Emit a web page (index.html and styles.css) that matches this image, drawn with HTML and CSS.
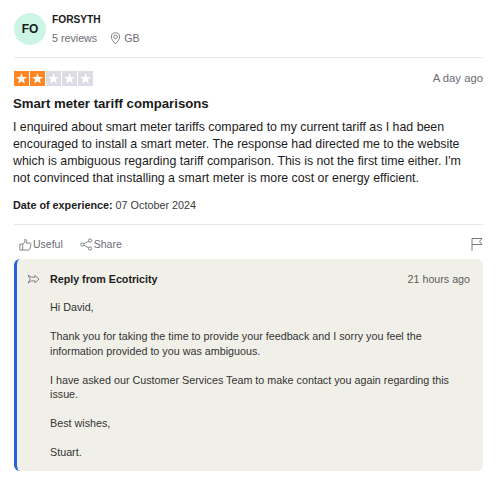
FILE: index.html
```html
<!DOCTYPE html>
<html lang="en">
<head>
<meta charset="utf-8">
<title>Review</title>
<link rel="stylesheet" href="styles.css">
</head>
<body>
<article class="card">
  <header class="consumer">
    <div class="avatar">FO</div>
    <div class="who">
      <div class="name">FORSYTH</div>
      <div class="meta">
        <span>5 reviews</span>
        <span class="loc">
          <svg class="pin" viewBox="0 0 12 14" width="11" height="13" fill="none" stroke="#6b6b75" stroke-width=".9"><path d="M6 13C3.500 10 1.500 8 1.500 5.300a4.500 4.500 0 0 1 9 0C10.500 8 8.500 10 6 13Z"/><circle cx="6" cy="5.300" r="2"/></svg>
          GB
        </span>
      </div>
    </div>
  </header>
  <hr class="rule">
  <div class="rating-row">
    <div class="stars">
      <span class="star on"><svg viewBox="0 0 14 14"><path d="M7 2l1.300 3.600 3.800.1-3 2.300 1.100 3.700L7 9.600l-3.200 2.100L4.900 8l-3-2.300 3.800-.1z"/></svg></span>
      <span class="star on"><svg viewBox="0 0 14 14"><path d="M7 2l1.300 3.600 3.800.1-3 2.300 1.100 3.700L7 9.600l-3.200 2.100L4.900 8l-3-2.300 3.800-.1z"/></svg></span>
      <span class="star"><svg viewBox="0 0 14 14"><path d="M7 2l1.300 3.600 3.800.1-3 2.300 1.100 3.700L7 9.600l-3.200 2.100L4.900 8l-3-2.300 3.800-.1z"/></svg></span>
      <span class="star"><svg viewBox="0 0 14 14"><path d="M7 2l1.300 3.600 3.800.1-3 2.300 1.100 3.700L7 9.600l-3.200 2.100L4.900 8l-3-2.300 3.800-.1z"/></svg></span>
      <span class="star"><svg viewBox="0 0 14 14"><path d="M7 2l1.300 3.600 3.800.1-3 2.300 1.100 3.700L7 9.600l-3.200 2.100L4.900 8l-3-2.300 3.800-.1z"/></svg></span>
    </div>
    <time class="ago">A day ago</time>
  </div>
  <h2 class="title">Smart meter tariff comparisons</h2>
  <p class="body">I enquired about smart meter tariffs compared to my current tariff as I had been encouraged to install a smart meter. The response had directed me to the website which is ambiguous regarding tariff comparison. This is not the first time either. I'm not convinced that installing a smart meter is more cost or energy efficient.</p>
  <p class="date"><b>Date of experience:</b> 07 October 2024</p>
  <hr class="rule rule-2">
  <div class="actions">
    <span class="action">
      <svg viewBox="0 0 14 14" width="13" height="13" fill="none" stroke="#6b6b75" stroke-width=".9"><path d="M1 6.500h3v6.500H1zM4 7l2.300-2.700V1.500c1.300 0 2 .8 2 2L7.800 5.500h4c.9 0 1.300.7 1.100 1.400l-1.200 5c-.2.700-.6 1.100-1.300 1.100H4"/></svg>
      Useful
    </span>
    <span class="action">
      <svg viewBox="0 0 14 14" width="13" height="13" fill="none" stroke="#6b6b75" stroke-width=".9"><circle cx="2.500" cy="7" r="1.700"/><circle cx="10.800" cy="2.700" r="1.700"/><circle cx="10.800" cy="11.300" r="1.700"/><path d="M4 6.200l5.300-2.700M4 7.800l5.300 2.700"/></svg>
      Share
    </span>
    <svg class="flag" viewBox="0 0 12 14" width="12" height="14" fill="none" stroke="#6b6b75" stroke-width=".9"><path d="M1 14V1.500h10L8.500 4.500 11 7.500H1"/></svg>
  </div>
  <section class="reply">
    <div class="reply-head">
      <svg class="reply-icon" viewBox="0 0 14 12" width="13" height="11" fill="none" stroke="#6b6b75" stroke-width=".9"><path d="M1 1.500l4 2h3.500V1.500l4.500 4-4.500 4V7.500H4.500L1 10l2.500-4.500z"/></svg>
      <b class="reply-from">Reply from Ecotricity</b>
      <time class="reply-ago">21 hours ago</time>
    </div>
    <div class="reply-text">
      <p>Hi David,</p>
      <p>Thank you for taking the time to provide your feedback and I sorry you feel the information provided to you was ambiguous.</p>
      <p>I have asked our Customer Services Team to make contact you again regarding this issue.</p>
      <p>Best wishes,</p>
      <p>Stuart.</p>
    </div>
  </section>
</article>
</body>
</html>
```
FILE: styles.css
```css
* { box-sizing: border-box; }
html, body { margin: 0; background: #fff; }
body { font-family: "Liberation Sans", Arial, sans-serif; color: #1c1c1c; width: 500px; height: 484px; overflow: hidden; }
.card { padding: 13px 17px 0 13px; width: 500px; }
.consumer { display: flex; gap: 6px; height: 33px; padding-left: 1px; }
.avatar { width: 32px; height: 32px; border-radius: 50%; background: #ccf5e6; display: flex; align-items: center; justify-content: center; font-size: 12px; font-weight: 700; color: #1c1c1c; }
.who { display: flex; flex-direction: column; }
.name { font-size: 10.200px; font-weight: 700; line-height: 14px; }
.meta { display: flex; gap: 13px; font-size: 10.700px; line-height: 14px; color: #6b6b75; margin-top: 4px; }
.loc { display: flex; align-items: center; gap: 3px; }
.rule { border: 0; border-top: 1px solid #e8e8e8; margin: 11px 0 0 1px; height: 0; }
.rating-row { display: flex; justify-content: space-between; align-items: center; margin-top: 12px; height: 16px; padding-left: 1px; }
.stars { display: flex; gap: 1px; }
.star { width: 15px; height: 15px; background: #dcdce6; display: flex; }
.star.on { background: #ff8622; }
.star svg { width: 15px; height: 15px; fill: #fff; }
.ago { font-size: 11.300px; color: #6b6b75; }
.title { font-size: 13.200px; font-weight: 700; line-height: 18px; margin: 9px 0 0; }
.body { font-size: 12.350px; line-height: 17px; margin: 6px 0 0; padding-right: 10px; color: #1c1c1c; }
.date { font-size: 10.800px; line-height: 14px; margin: 11px 0 0; color: #3a3a3a; }
.date b { color: #1c1c1c; }
.rule-2 { margin-top: 12px; }
.actions { display: flex; align-items: center; gap: 17px; padding: 4px 0 0 6px; height: 34px; font-size: 10.500px; color: #6b6b75; }
.action { display: flex; align-items: center; gap: 1px; }
.flag { margin-left: auto; }
.reply { background: #f1f0e8; border-left: 3px solid #2a5fdc; border-radius: 6px; height: 212px; margin-left: 1px; padding: 12px 13px 0 10px; }
.reply-head { display: flex; align-items: center; gap: 10px; height: 16px; font-size: 10.700px; }
.reply-ago { margin-left: auto; color: #5c5c5c; }
.reply-text { padding: 0 14px 0 23px; font-size: 10.750px; line-height: 14.500px; color: #333; margin-top: 13px; }
.reply-text p { margin: 0 0 14.500px; }
```
